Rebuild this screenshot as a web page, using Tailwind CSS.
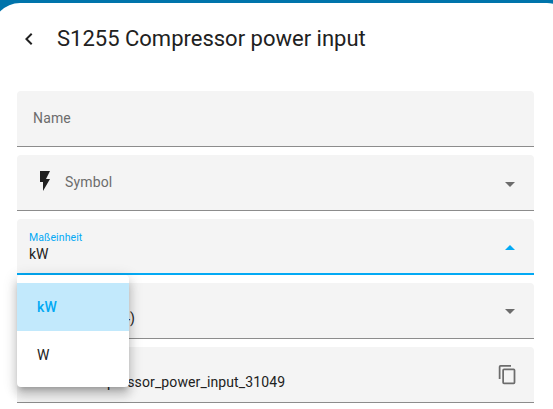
<!DOCTYPE html>
<html lang="de">
<head>
    <meta charset="UTF-8">
    <meta name="viewport" content="width=device-width, initial-scale=1.0">
    <title>S1255 Compressor power input</title>
    <script src="https://cdn.jsdelivr.net/npm/@tailwindcss/browser@4"></script>
</head>
<body class="h-screen overflow-hidden bg-[#0074ab] pt-[3px] font-['Roboto',sans-serif] text-[#212121]">
    <!-- Dialog -->
    <div class="-ml-2 h-full w-[583px] rounded-t-[28px] bg-white pl-[25px]">
        <!-- Header -->
        <header class="flex h-[88px] items-start pt-[22px]">
            <svg class="mt-0.5 h-6 w-6" viewBox="0 0 24 24" fill="currentColor"><path d="M15.41 16.58L10.83 12l4.58-4.59L14 6l-6 6 6 6z"/></svg>
            <h1 class="ml-4 text-[22px] leading-7">S1255 Compressor power input</h1>
        </header>

        <!-- Form -->
        <main class="flex w-[517px] flex-col gap-2 text-sm">
            <label class="flex h-14 items-center rounded-t border-b border-[#8c8c8c] bg-[#f4f4f4] px-4 pb-0.5 tracking-[0.15px] text-[#6c6c6c]">Name</label>

            <div class="flex h-14 items-center rounded-t border-b border-[#8c8c8c] bg-[#f4f4f4] px-4 text-[#6c6c6c]">
                <svg class="-mt-1 h-6 w-6 text-[#212121]" viewBox="0 0 24 24" fill="currentColor"><path d="M7 2v11h3v9l7-12h-4l4-8z"/></svg>
                <span class="ml-2 pb-0.5 tracking-[0.15px]">Symbol</span>
                <svg class="mt-0.5 -mr-1 ml-auto h-6 w-6" viewBox="0 0 24 24" fill="currentColor"><path d="M7 10l5 5 5-5z"/></svg>
            </div>

            <!-- Unit of measurement -->
            <div class="relative flex h-14 items-center rounded-t border-b-2 border-[#03a9f4] bg-[#f4f4f4] px-3">
                <div>
                    <div class="text-[10.5px] leading-4 tracking-[0.1px] text-[#03a9f4]">Maßeinheit</div>
                    <div class="leading-4">kW</div>
                </div>
                <svg class="mt-[3px] ml-auto h-6 w-6 text-[#03a9f4]" viewBox="0 0 24 24" fill="currentColor"><path d="M7 14l5-5 5 5z"/></svg>

                <ul class="absolute top-14 left-0 z-10 w-28 rounded bg-white py-2 shadow-[0_5px_5px_-3px_rgba(0,0,0,0.2),0_8px_10px_1px_rgba(0,0,0,0.14),0_3px_14px_2px_rgba(0,0,0,0.12)]">
                    <li class="flex h-12 items-center bg-[#c2e9fc] px-5 font-medium tracking-[0.15px] text-[#03a9f4]">kW</li>
                    <li class="flex h-12 items-center px-5">W</li>
                </ul>
            </div>

            <div class="flex h-14 items-center rounded-t border-b border-[#8c8c8c] bg-[#f4f4f4] px-3">
                <span class="w-[106px] pt-[15px] text-right whitespace-nowrap">Standard (1234)</span>
                <svg class="ml-auto h-6 w-6 text-[#6c6c6c]" viewBox="0 0 24 24" fill="currentColor"><path d="M7 10l5 5 5-5z"/></svg>
            </div>

            <div class="flex h-14 items-center rounded-t border-b border-[#8c8c8c] bg-[#f4f4f4] px-4">
                <span class="pt-[15px] tracking-[0.12px]">sensor.compressor_power_input_31049</span>
                <svg class="ml-auto h-[21px] w-[21px] text-[#6c6c6c]" viewBox="0 0 24 24" fill="currentColor"><path d="M19 21H8V7h11m0-2H8a2 2 0 0 0-2 2v14a2 2 0 0 0 2 2h11a2 2 0 0 0 2-2V7a2 2 0 0 0-2-2m-3-4H4a2 2 0 0 0-2 2v14h2V3h12z"/></svg>
            </div>
        </main>
    </div>
</body>
</html>
